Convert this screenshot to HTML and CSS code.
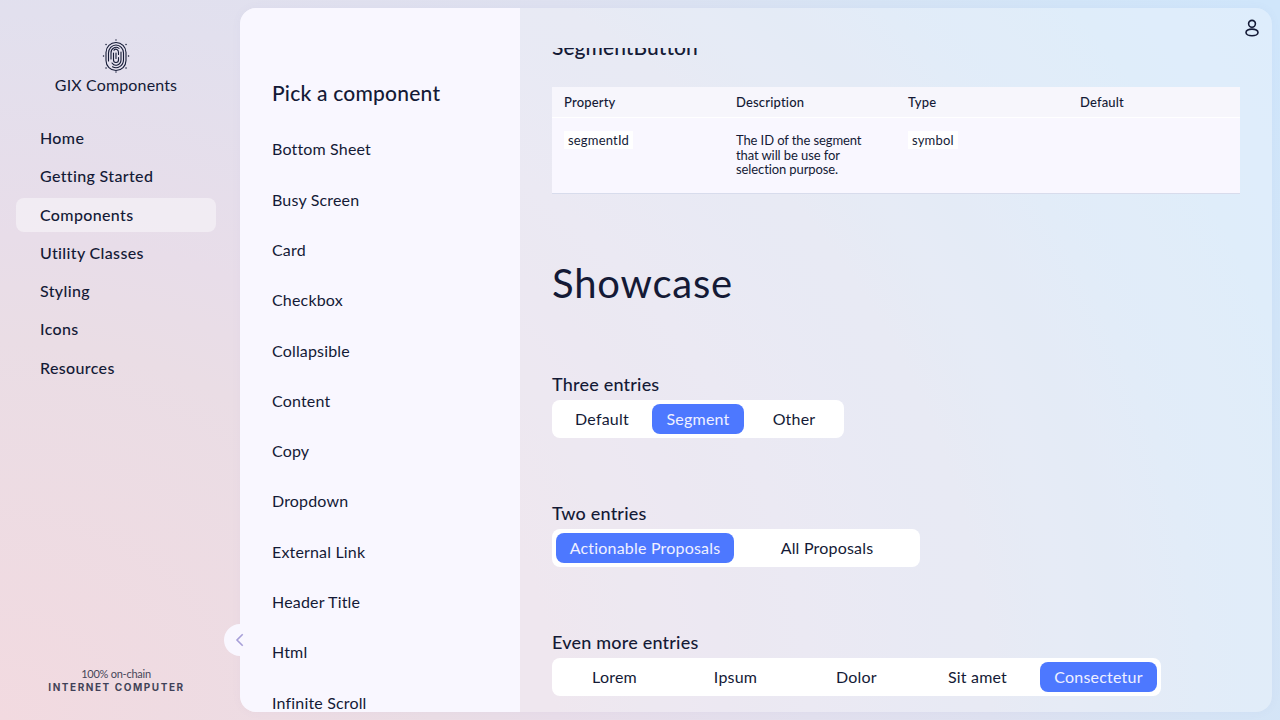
FILE: index.html
```html
<!DOCTYPE html>
<html lang="en">
<head>
<meta charset="utf-8">
<title>GIX Components</title>
<link rel="stylesheet" href="styles.css">
</head>
<body>
<div class="app">
  <aside class="sidebar">
    <div class="brand">
      <svg width="28" height="34" viewBox="0 0 28 34" fill="none" stroke="#141a36" stroke-width="1.1" stroke-linecap="round">
        <rect x="4" y="3.5" width="20" height="28" rx="10"/>
        <path d="M6.5 22V14a7.5 8 0 0 1 15 0v7a7.5 8 0 0 1-11 6.8"/>
        <path d="M9 20v-6a5 5.5 0 0 1 8-4.6M19 13v8a5 5.5 0 0 1-9 3"/>
        <path d="M12 11.2a2.6 3 0 0 1 4.5 2.3v2M11.5 14v7a2.5 2.5 0 0 0 5 0v-2.5"/>
        <path d="M14 14v5.5"/>
        <path stroke-width="1.4" d="M14 1v.1M14 33v.1M1.5 17h.1M26.5 17h.1M4 5.5h.1M24 5.5h.1M4 29h.1M24 29h.1"/>
      </svg>
      <span class="brand-name">GIX Components</span>
    </div>
    <nav class="menu">
      <a>Home</a>
      <a>Getting Started</a>
      <a class="selected">Components</a>
      <a>Utility Classes</a>
      <a>Styling</a>
      <a>Icons</a>
      <a>Resources</a>
    </nav>
    <footer class="onchain">
      <span class="onchain-top">100% on-chain</span>
      <span class="onchain-name">INTERNET COMPUTER</span>
    </footer>
  </aside>
  <div class="frame">
    <div class="toggle">
      <svg width="20" height="20" viewBox="0 0 20 20" fill="none" stroke="#a79fd8" stroke-width="1.6"><path d="M12.7 4.3 7 10l5.7 5.7"/></svg>
    </div>
    <section class="picker">
      <h2>Pick a component</h2>
      <ul>
        <li>Bottom Sheet</li>
        <li>Busy Screen</li>
        <li>Card</li>
        <li>Checkbox</li>
        <li>Collapsible</li>
        <li>Content</li>
        <li>Copy</li>
        <li>Dropdown</li>
        <li>External Link</li>
        <li>Header Title</li>
        <li>Html</li>
        <li>Infinite Scroll</li>
      </ul>
    </section>
    <main class="detail">
      <header class="toolbar">
        <svg width="20" height="20" viewBox="0 0 20 20" fill="none" stroke="#141a36" stroke-width="1.6"><circle cx="10" cy="5.8" r="3.4"/><ellipse cx="10" cy="14.4" rx="6" ry="3.3"/></svg>
      </header>
      <div class="scroll">
        <h3 class="prop-title">SegmentButton</h3>
        <div class="table">
          <div class="row head"><span>Property</span><span>Description</span><span>Type</span><span>Default</span></div>
          <div class="row body"><span><code>segmentId</code></span><span class="desc">The ID of the segment<br>that will be use for<br>selection purpose.</span><span><code>symbol</code></span><span></span></div>
        </div>
        <h1>Showcase</h1>
        <div class="example">
          <h4>Three entries</h4>
          <div class="segments three"><span>Default</span><span class="on">Segment</span><span>Other</span></div>
        </div>
        <div class="example">
          <h4>Two entries</h4>
          <div class="segments two"><span class="on">Actionable Proposals</span><span>All Proposals</span></div>
        </div>
        <div class="example">
          <h4>Even more entries</h4>
          <div class="segments five"><span>Lorem</span><span>Ipsum</span><span>Dolor</span><span>Sit amet</span><span class="on">Consectetur</span></div>
        </div>
      </div>
    </main>
  </div>
</div>
</body>
</html>
```
FILE: styles.css
```css
* { box-sizing: border-box; }
body {
  margin: 0;
  height: 720px;
  overflow: hidden;
  color: #141a36;
  font-family: Lato, "Liberation Sans", sans-serif;
  font-size: 16px;
  letter-spacing: 0.25px;
  background: radial-gradient(1500px 1310px at 0 100%, #f2dae0 0, #eadde5 29%, #e8dde9 37%, #e2e0ee 54%, #dee1f0 66%, #d6e4f5 80%, #d2e5f8 90%, #d0e6fb 100%);
}
h1, h2, h3, h4, ul { margin: 0; padding: 0; font-weight: 500; }
.app { display: flex; height: 720px; }
.sidebar { width: 240px; padding: 39px 24px 25px 16px; display: flex; flex-direction: column; }
.brand { display: flex; flex-direction: column; align-items: center; }
.brand svg { display: block; }
.brand-name { line-height: 24px; letter-spacing: 0.15px; }
.menu { display: flex; flex-direction: column; gap: 4.3px; margin-top: 24px; font-weight: 500; letter-spacing: 0.35px; }
.menu a { height: 34px; line-height: 33px; padding-left: 24px; border-radius: 8px; }
.menu .selected { background: rgba(255, 255, 255, 0.44); }
.onchain { margin-top: auto; display: flex; flex-direction: column; align-items: center; opacity: 0.8; }
.onchain-top { font-size: 11px; line-height: 13px; letter-spacing: -0.25px; }
.onchain-name { font-family: Inter, Lato, sans-serif; font-size: 10px; line-height: 15px; font-weight: 700; letter-spacing: 1.55px; white-space: nowrap; padding-left: 1px; }
.frame {
  position: relative;
  width: 1032px;
  height: 704px;
  margin-top: 8px;
  display: flex;
  border-radius: 16px;
  background: rgba(255, 255, 255, 0.3);
  box-shadow: 0 0 10px rgba(120, 110, 170, 0.05);
}
.toggle { position: absolute; left: -16px; top: 616px; width: 32px; height: 32px; border-radius: 50%; background: #f9f7ff; padding: 6px; }
.picker { width: 280px; background: #f9f7ff; border-radius: 16px 0 0 16px; padding: 70px 32px 0; overflow: hidden; }
.picker h2 { font-size: 21px; line-height: 30px; letter-spacing: 0.22px; }
.picker ul { list-style: none; margin-top: 16.4px; font-weight: 400; letter-spacing: 0.17px; }
.picker li { height: 50.3px; line-height: 50px; }
.detail { width: 752px; display: flex; flex-direction: column; overflow: hidden; }
.toolbar { height: 40px; display: flex; justify-content: flex-end; padding: 10px; flex-shrink: 0; }
.scroll { flex: 1; padding: 0 32px; overflow: hidden; }
.prop-title { font-size: 21px; line-height: 28px; margin-top: -15px; letter-spacing: 0.05px; }
.table { margin-top: 26px; font-size: 13px; letter-spacing: 0.18px; background: #f9f7ff; border-bottom: 1px solid #d8dcec; }
.row { display: grid; grid-template-columns: repeat(4, 172px); padding-left: 12px; }
.head { height: 31px; line-height: 30px; font-weight: 500; background: #f7f6fc; border-bottom: 1px solid #fff; }
.body { height: 75px; padding-top: 15px; line-height: 14.5px; }
.row code { font: inherit; background: #fff; padding: 1px 4px; }
.desc { letter-spacing: -0.1px; }
h1 { font-size: 40px; line-height: 48px; margin-top: 65px; font-weight: 400; letter-spacing: 0.8px; }
.example { margin-top: 63px; }
.example h4 { font-size: 18px; line-height: 24px; padding-bottom: 4px; letter-spacing: 0.2px; }
h1 + .example { margin-top: 65px; }
.segments { display: grid; height: 38px; padding: 4px; background: #fff; border-radius: 8px; line-height: 30px; text-align: center; letter-spacing: 0.2px; }
.segments span { border-radius: 8px; }
.segments .on { background: #4d78ff; color: #f0f0ff; }
.three { width: 292px; grid-template-columns: 92px 92px 92px; column-gap: 4px; }
.two { width: 368px; grid-template-columns: 178px 178px; column-gap: 4px; }
.five { width: 609px; grid-template-columns: repeat(5, 117px); column-gap: 4px; }
```
